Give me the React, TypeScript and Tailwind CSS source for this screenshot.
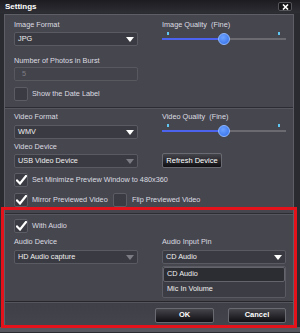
import {ReactNode} from "react";

const font = "font-['Liberation_Sans',Arial,sans-serif]";

function Label({children}: {children: ReactNode}) {
    return <div className="h-[10px] leading-[10px] text-[7.3px] text-[#dcdce0]">{children}</div>
}

function Select({value, dim = false}: {value: string, dim?: boolean}) {
    return (
        <div className="flex h-[14px] w-[124px] items-center justify-between rounded-[2px] border border-[#5a5a63] bg-[#3a3a42] pl-[3px] pr-[3px]">
            <span className="text-[7.3px] text-[#f0f0f0]">{value}</span>
            <svg width="8" height="5" viewBox="0 0 8 5">
                <path d="M0 0 H8 L4 5 Z" fill={dim ? "#7c7c84" : "#ffffff"} />
            </svg>
        </div>
    )
}

function Check({checked}: {checked: boolean}) {
    return (
        <div className="flex h-[14px] w-[14px] shrink-0 items-center justify-center rounded-[2px] border border-[#5c5c65] bg-[#3b3b43]">
            {checked && (
                <svg width="11" height="10" viewBox="0 0 11 10">
                    <path d="M1 5.5 L4 8.5 L10 1" stroke="#ffffff" strokeWidth="2.2" fill="none" strokeLinecap="square" />
                </svg>
            )}
        </div>
    )
}

function Slider() {
    return (
        <div className="relative h-[13px] w-[124px]">
            <div className="absolute left-[5px] top-0 h-[3px] w-[2px] bg-[#5fc6f2]" />
            <div className="absolute right-[6px] top-0 h-[3px] w-[2px] bg-[#5fc6f2]" />
            <div className="absolute left-0 top-[6px] h-[2px] w-[124px] bg-[#6a6a70]" />
            <div className="absolute left-0 top-[6px] h-[2px] w-[62px] bg-[#4b63ee]" />
            <div className="absolute left-[56px] top-[1px] h-[12px] w-[12px] rounded-full border border-[#8fb8ff] bg-[radial-gradient(circle_at_40%_35%,#6ea2ff,#2f6de8)]" />
        </div>
    )
}

function Button({children, bold = false, w}: {children: ReactNode, bold?: boolean, w: string}) {
    return (
        <div className={`flex h-[15px] items-center justify-center rounded-[2px] border border-[#6a6a72] bg-gradient-to-b from-[#45454c] to-[#101014] text-[7.5px] text-white ${bold ? "font-bold" : ""} ${w}`}>
            {children}
        </div>
    )
}

function Separator() {
    return (
        <div className="-ml-[9px] w-[288px]">
            <div className="h-px bg-[#2c2c33]" />
            <div className="h-px bg-[#56565f]" />
        </div>
    )
}

export default function App() {
    return (
        <div className={`relative h-[333px] w-[300px] overflow-hidden bg-[#2a2a31] ${font}`}>
            {/* title bar */}
            <div className="flex h-[13px] items-center justify-between bg-gradient-to-b from-[#1c1c21] to-[#2e2e35] pl-[5px] pr-[8px]">
                <span className="text-[8px] font-bold text-white">Settings</span>
                <div className="flex h-[9px] w-[14px] items-center justify-center rounded-[2px] border border-[#55555c] bg-[#141417]">
                    <svg width="7" height="6" viewBox="0 0 7 6">
                        <path d="M1 0.5 L6 5.5 M6 0.5 L1 5.5" stroke="#ffffff" strokeWidth="1.6" />
                    </svg>
                </div>
            </div>

            {/* panel */}
            <div className="ml-[4px] mt-[1px] h-[313px] w-[290px] border border-[#5e5e67] bg-[#46464f]">
                <div className="flex h-[286px] flex-col pl-[9px] pt-[5px]">
                    {/* image format / quality */}
                    <div className="flex gap-[24px]">
                        <div className="flex w-[124px] flex-col gap-[2px]">
                            <Label>Image Format</Label>
                            <Select value="JPG" />
                        </div>
                        <div className="flex w-[124px] flex-col gap-[2px]">
                            <Label>Image Quality&nbsp; (Fine)</Label>
                            <Slider />
                        </div>
                    </div>

                    <div className="mt-[10px] flex w-[124px] flex-col gap-px">
                        <Label>Number of Photos in Burst</Label>
                        <div className="flex h-[14px] items-center rounded-[2px] border border-[#58585f] bg-[#43434b] pl-[7px] text-[7.3px] text-[#7d7d85]">5</div>
                    </div>

                    <div className="mt-[6px] flex items-center gap-[4px]">
                        <Check checked={false} />
                        <span className="text-[7.3px] text-[#dcdce0]">Show the Date Label</span>
                    </div>

                    <div className="mt-[6px]"><Separator /></div>

                    {/* video format / quality */}
                    <div className="mt-[3px] flex gap-[24px]">
                        <div className="flex w-[124px] flex-col gap-[3px]">
                            <Label>Video Format</Label>
                            <Select value="WMV" />
                        </div>
                        <div className="flex w-[124px] flex-col gap-[2px]">
                            <Label>Video Quality&nbsp; (Fine)</Label>
                            <Slider />
                        </div>
                    </div>

                    <div className="mt-[3px] flex items-end gap-[24px]">
                        <div className="flex w-[124px] flex-col gap-[2px]">
                            <Label>Video Device</Label>
                            <Select value="USB Video Device" dim />
                        </div>
                        <Button w="w-[60px]">Refresh Device</Button>
                    </div>

                    <div className="mt-[5px] flex items-center gap-[4px]">
                        <Check checked />
                        <span className="text-[7.3px] text-[#dcdce0]">Set Minimize Preview Window to 480x360</span>
                    </div>

                    <div className="mt-[6px] flex items-center">
                        <Check checked />
                        <span className="ml-[4px] w-[81px] text-[7.3px] text-[#dcdce0]">Mirror Previewed Video</span>
                        <Check checked={false} />
                        <span className="ml-[5px] text-[7.3px] text-[#dcdce0]">Flip Previewed Video</span>
                    </div>

                    <div className="mt-[6px]"><Separator /></div>

                    <div className="mt-[4px] flex items-center gap-[4px]">
                        <Check checked />
                        <span className="text-[7.3px] text-[#dcdce0]">With Audio</span>
                    </div>

                    <div className="mt-[4px] flex gap-[24px]">
                        <div className="flex w-[124px] flex-col gap-[3px]">
                            <Label>Audio Device</Label>
                            <Select value="HD Audio capture" dim />
                        </div>
                        <div className="relative flex w-[124px] flex-col gap-[3px]">
                            <Label>Audio Input Pin</Label>
                            <Select value="CD Audio" />
                            {/* open list */}
                            <div className="absolute left-0 top-[29px] z-10 flex h-[32px] w-[124px] flex-col rounded-[2px] border border-[#5a5a63] bg-[#3c3c44]">
                                <div className="flex h-[15px] items-center rounded-[2px] border border-[#64646c] bg-[#2c2c33] pl-[3px] text-[7.3px] text-[#f0f0f0]">CD Audio</div>
                                <div className="flex h-[15px] items-center pl-[4px] text-[7.3px] text-[#f0f0f0]">Mic In Volume</div>
                            </div>
                        </div>
                    </div>
                </div>

                {/* footer */}
                <div className="h-px bg-[#26262c]" />
                <div className="flex h-[25px] items-center justify-end gap-[14px] border-t border-[#55555e] bg-gradient-to-b from-[#3f3f48] to-[#44444d] pr-[7px]">
                    <Button bold w="w-[59px]">OK</Button>
                    <Button bold w="w-[58px]">Cancel</Button>
                </div>
            </div>
            <div className="h-[5px] bg-[#56565e]" />

            {/* red highlight annotation */}
            <div className="pointer-events-none absolute left-[1px] top-[207px] z-20 h-[121px] w-[296px] border-[3px] border-[#e3121b]" />
        </div>
    )
}
